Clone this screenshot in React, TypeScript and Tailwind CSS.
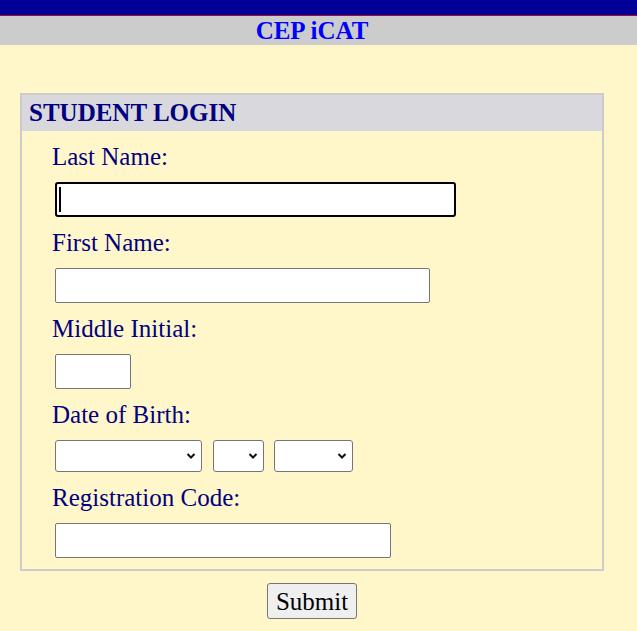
import React from 'react'

function Chevron() {
  return (
    <svg className="pointer-events-none absolute right-[6px] top-1/2 -translate-y-1/2" width="10" height="7" viewBox="0 0 10 7">
      <path d="M1.5 1.5 L5 5 L8.5 1.5" fill="none" stroke="#111" strokeWidth="2" />
    </svg>
  )
}

function Select({ width }: { width: string }) {
  return (
    <div className={`relative ${width} h-[32px]`}>
      <select className="appearance-none w-full h-full bg-white border border-[#767676] rounded-[3px]">
        <option></option>
      </select>
      <Chevron />
    </div>
  )
}

function Label({ children }: { children: React.ReactNode }) {
  return <div className="h-[27px] leading-[27px] text-[25px] text-[#000080] pl-[30px]">{children}</div>
}

export default function App() {
  return (
    <div className="min-h-[631px] w-[637px] bg-[#fff7c9] font-['Liberation_Serif',serif]">
      <div className="h-[15px] bg-[#000099]" />
      <div className="h-px bg-[#b00030]" />
      <div className="h-[29px] bg-[#cccccc] flex items-center justify-center pr-[13px]">
        <span className="text-[25px] font-bold text-[#0000ff] leading-none">CEP iCAT</span>
      </div>

      <div className="ml-[20px] mt-[48px] w-[584px] border-2 border-[#cccccc]">
        <div className="h-[36px] bg-[#d8d8dd] flex items-center pl-[7px]">
          <span className="text-[25px] font-bold text-[#000080]">STUDENT LOGIN</span>
        </div>

        <div className="pt-[12px] pb-[11px] flex flex-col gap-y-[12px]">
          <Label>Last Name:</Label>
          <div className="pl-[33px]">
            <div className="relative w-[401px] h-[35px] bg-white border-2 border-black rounded-[3px]">
              <div className="absolute left-[2px] top-[3px] w-[2px] h-[25px] bg-black" />
            </div>
          </div>

          <Label>First Name:</Label>
          <div className="pl-[33px]">
            <input className="w-[375px] h-[35px] bg-white border border-[#767676] rounded-[2px]" />
          </div>

          <Label>Middle Initial:</Label>
          <div className="pl-[33px]">
            <input className="w-[76px] h-[35px] bg-white border border-[#767676] rounded-[2px]" />
          </div>

          <Label>Date of Birth:</Label>
          <div className="pl-[33px] flex">
            <Select width="w-[147px]" />
            <div className="ml-[11px]">
              <Select width="w-[51px]" />
            </div>
            <div className="ml-[10px]">
              <Select width="w-[79px]" />
            </div>
          </div>

          <Label>Registration Code:</Label>
          <div className="pl-[33px]">
            <input className="w-[336px] h-[35px] bg-white border border-[#767676] rounded-[2px]" />
          </div>
        </div>
      </div>

      <div className="w-[584px] ml-[20px] mt-[12px] flex justify-center">
        <button className="h-[36px] w-[90px] text-[25px] leading-none text-black bg-[#efefef] border border-[#767676] rounded-[3px]">
          Submit
        </button>
      </div>
    </div>
  )
}
